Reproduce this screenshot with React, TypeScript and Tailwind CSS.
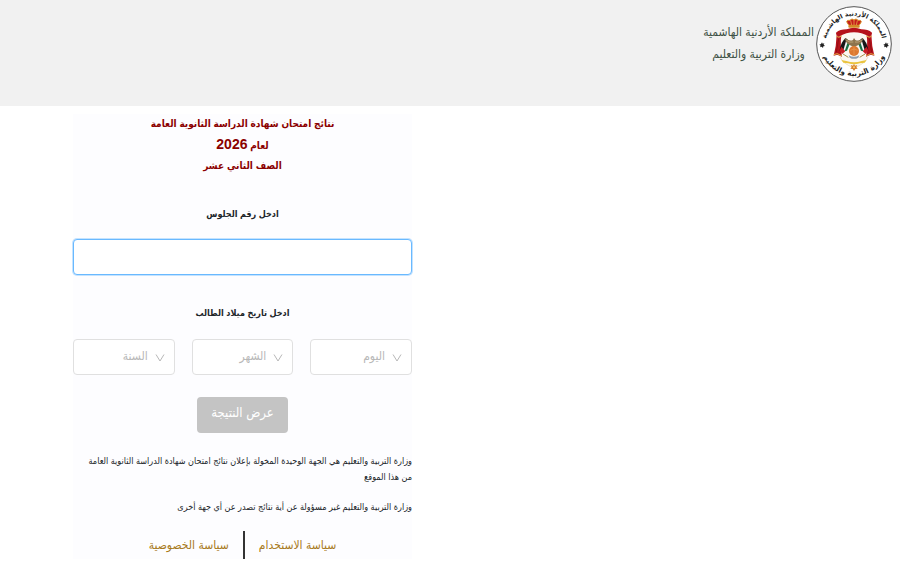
import { useState } from 'react';

const range = (from: number, to: number) =>
  Array.from({ length: to - from + 1 }, (_, i) => from + i);

const dateFields = [
  { id: 'day', label: 'اليوم', options: range(1, 31) },
  { id: 'month', label: 'الشهر', options: range(1, 12) },
  { id: 'year', label: 'السنة', options: range(1990, 2012) }
];

function Emblem() {
  return (
    <svg viewBox="12 12 228 228" className="h-[76px] w-[76px] shrink-0" role="img" aria-label="شعار وزارة التربية والتعليم">
      <defs>
        <path id="arc-top" d="M 41 126 A 85 85 0 0 1 211 126" />
        <path id="arc-bottom" d="M 24 120 A 102 102 0 0 0 228 120" />
      </defs>
      <circle cx="126" cy="126" r="112" fill="#fff" stroke="#555" strokeWidth="3" />
      <g fontFamily="DejaVu Sans, sans-serif" fontWeight="bold" fill="#222" textAnchor="middle">
        <text fontSize="19"><textPath href="#arc-top" startOffset="50%">المملكة الأردنية الهاشمية</textPath></text>
        <text fontSize="22"><textPath href="#arc-bottom" startOffset="50%">وزارة التربية والتعليم</textPath></text>
      </g>
      <g fill="#222">
        <path d="M30 121l2 4 5-1-2 4 4 4-5 1-1 5-4-4-5 2 2-5-4-3 5-2z" />
        <path d="M222 121l2 4 5-1-2 4 4 4-5 1-1 5-4-4-5 2 2-5-4-3 5-2z" />
      </g>
      {/* mantle */}
      <path d="M78 92 Q126 72 174 92 L170 160 Q162 184 126 194 Q90 184 82 160 Z" fill="#fbf8f1" />
      <path d="M104 82 Q126 72 148 82 Q168 82 180 92 Q180 104 168 102 Q150 92 126 91 Q102 92 84 102 Q72 104 72 92 Q84 82 104 82 Z" fill="#b5121b" />
      <path d="M74 98 Q80 106 88 100 Q84 128 90 164 L76 158 L65 161 Q73 132 74 98 Z" fill="#b5121b" />
      <path d="M178 98 Q172 106 164 100 Q168 128 162 164 L176 158 L187 161 Q179 132 178 98 Z" fill="#b5121b" />
      <path d="M65 158 L76 155 L90 162 M187 158 L176 155 L162 162 M73 103 Q80 109 89 102 M179 103 Q172 109 163 102" fill="none" stroke="#e6b348" strokeWidth="3" />
      <path d="M80 110 L73 150 M172 110 L179 150" stroke="#7e0c12" strokeWidth="2" />
      <path d="M84 165 Q91 184 126 198 Q161 184 168 165" fill="none" stroke="#e6d4ab" strokeWidth="2" />
      {/* crown */}
      <path d="M111 70 Q96 53 114 55 Q120 47 126 54 Q132 47 138 55 Q156 53 141 70 Z" fill="#c51d1c" stroke="#db982d" strokeWidth="3" />
      <path d="M126 53 V70 M116 56 L119 69 M136 56 L133 69" stroke="#edbb54" strokeWidth="2" />
      <rect x="109" y="69" width="34" height="8" rx="3" fill="#d48a26" />
      {/* flags */}
      <path d="M101 108 Q86 120 83 146 L92 150 L111 116 Z" fill="#171717" />
      <path d="M103 114 L94 145 L99 147 L113 118 Z" fill="#f4f4f4" />
      <path d="M108 118 L98 148 L105 146 L114 124 Z" fill="#177245" />
      <path d="M83 146 L88 134 L100 148 L91 156 Z" fill="#c81e25" />
      <path d="M151 108 Q166 120 169 146 L160 150 L141 116 Z" fill="#171717" />
      <path d="M149 114 L158 145 L153 147 L139 118 Z" fill="#f4f4f4" />
      <path d="M144 118 L154 148 L147 146 L138 124 Z" fill="#177245" />
      <path d="M169 146 L164 134 L152 148 L161 156 Z" fill="#c81e25" />
      {/* eagle over the globe */}
      <path d="M98 108 Q112 119 123 114 L126 108 L130 114 Q142 119 154 108 Q150 127 133 132 L126 136 L119 132 Q102 127 98 108 Z" fill="#8d744d" />
      <path d="M103 115 Q114 123 124 120 M149 115 Q138 123 129 120" fill="none" stroke="#d0bb8a" strokeWidth="2" />
      <circle cx="126" cy="147" r="15" fill="#dc792f" />
      <path d="M115 145 Q126 137 137 145 M126 134 V160" fill="none" stroke="#ed9d52" strokeWidth="2" />
      <path d="M110 160 Q126 169 142 160 L139 167 Q126 174 113 167 Z" fill="#8d9fb1" />
      <path d="M93 156 L109 166 M159 156 L143 166" stroke="#a98c43" strokeWidth="3" />
      <path d="M88 174 L103 177 Q126 185 149 177 L164 174 L158 182 L143 184 Q126 190 109 184 L94 182 Z" fill="#eac43e" />
      <path d="M126 185l3 6 7-2-3 6 4 5-7 1-4 6-4-6-7-1 4-5-3-6 7 2z" fill="#d9822b" />
      <circle cx="126" cy="196" r="3" fill="#f5d277" />
    </svg>
  );
}

export default function App() {
  const [seatNumber, setSeatNumber] = useState('');

  return (
    <div className="min-h-screen bg-white font-['Liberation_Sans','DejaVu_Sans_Condensed','DejaVu_Sans',sans-serif] text-[#212529]" dir="rtl">
      <header className="flex h-[106px] items-start bg-[#f1f1f1] px-2 pt-1.5">
        <Emblem />
        <div className="mr-0.5 pt-[15px] text-center text-[12px] leading-[22px] text-[#3f5145]">
          <p>المملكة الأردنية الهاشمية</p>
          <p>وزارة التربية والتعليم</p>
        </div>
      </header>

      <main className="flex justify-end pt-2">
        <form className="ml-[73px] w-full max-w-[339px] bg-[#fdfdff]" onSubmit={(e) => e.preventDefault()}>
          <h1 className="text-center text-[10px] leading-5 font-bold text-[#8b0000]">
            <span className="block">نتائج امتحان شهادة الدراسة الثانوية العامة</span>
            <span className="block">لعام <span className="text-sm leading-5">2026</span></span>
            <span className="block">الصف الثاني عشر</span>
          </h1>

          <label htmlFor="seat" className="mt-7 block text-center text-[9px] leading-5 font-bold">
            ادخل رقم الجلوس
          </label>
          <input
            id="seat"
            type="text"
            value={seatNumber}
            onChange={(e) => setSeatNumber(e.target.value)}
            className="mt-[15px] block h-9 w-full rounded border border-[#69b9ff] bg-white px-3 text-sm shadow-[0_0_0_1px_#c4e3ff] outline-none"
          />

          <fieldset className="mt-7">
            <legend className="w-full text-center text-[9px] leading-5 font-bold">ادخل تاريخ ميلاد الطالب</legend>
            <div className="mt-4 grid grid-cols-3 gap-[17px]">
              {dateFields.map((field) => (
                <div key={field.id} className="relative">
                  <select
                    aria-label={field.label}
                    defaultValue=""
                    className="h-9 w-full appearance-none rounded border border-[#e0e0e0] bg-white pr-[26px] pb-0.5 pl-2 text-[12px] text-[#b8b8b8]"
                  >
                    <option value="">{field.label}</option>
                    {field.options.map((n) => (
                      <option key={n} value={n}>{n}</option>
                    ))}
                  </select>
                  <svg viewBox="0 0 10 10" className="pointer-events-none absolute top-3.5 right-2.5 h-2.5 w-2.5" fill="none" stroke="#b8b8b8">
                    <path d="M1 1.5L5 8L9 1.5" />
                  </svg>
                </div>
              ))}
            </div>
          </fieldset>

          <div className="mt-[22px] text-center">
            <button type="submit" className="h-9 rounded bg-[#c4c4c4] px-3.5 pb-1 text-[13px] text-white">
              عرض النتيجة
            </button>
          </div>

          <div className="mt-5 pl-1.5 text-[9px] leading-4">
            <p>وزارة التربية والتعليم هي الجهة الوحيدة المخولة بإعلان نتائج امتحان شهادة الدراسة الثانوية العامة من هذا الموقع</p>
            <p className="mt-3.5">وزارة التربية والتعليم غير مسؤولة عن أية نتائج تصدر عن أي جهة أخرى</p>
          </div>

          <nav className="mt-4 flex items-center justify-center text-[12px] leading-7 text-[#a87a1c]">
            <a href="#terms" className="pl-3.5">سياسة الاستخدام</a>
            <a href="#privacy" className="border-r-2 border-[#333] pr-3.5">سياسة الخصوصية</a>
          </nav>
        </form>
      </main>
    </div>
  );
}
